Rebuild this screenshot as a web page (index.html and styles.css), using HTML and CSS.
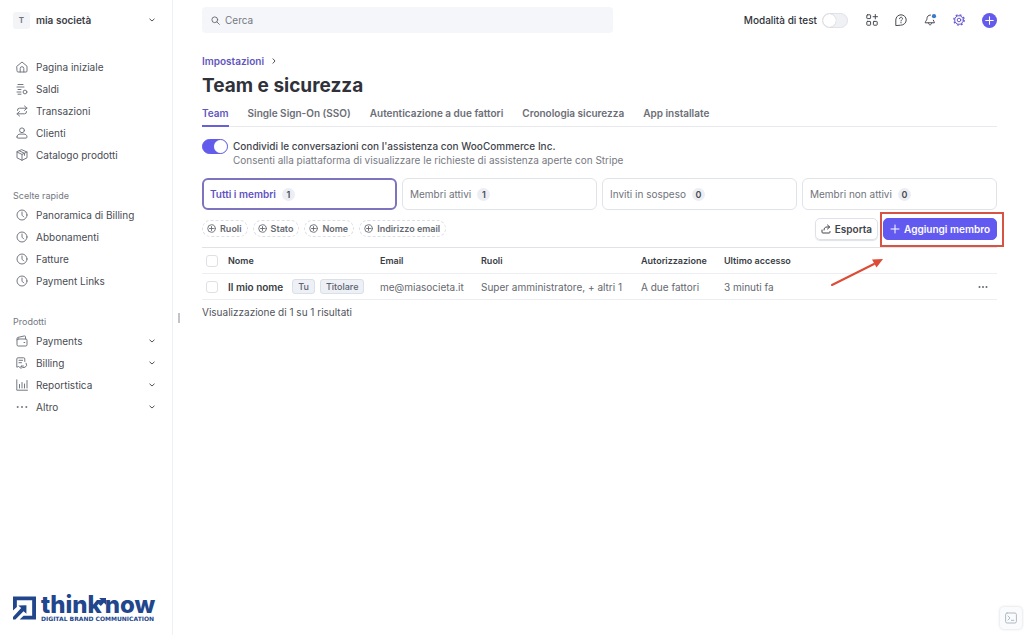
FILE: index.html
```html
<!doctype html>
<html lang="it">
  <head>
    <meta charset="UTF-8" />
    <meta name="viewport" content="width=device-width, initial-scale=1.0" />
    <title>Team e sicurezza</title>
    <link rel="stylesheet" href="styles.css" />
  </head>
  <body>
    <svg class="sprite" aria-hidden="true">
      <symbol id="chevron" viewBox="0 0 8 8"><path d="M1.800 3 4 5l2.200-2" /></symbol>
      <symbol id="clock" viewBox="0 0 12 12"><circle cx="6" cy="6" r="5" /><path d="M6 3v3.200l1.700 1.700" /></symbol>
      <symbol id="plus-circle" viewBox="0 0 10 10"><circle cx="5" cy="5" r="4.200" /><path d="M5 2.800v4.400M2.800 5h4.400" /></symbol>
    </svg>

    <div class="layout">
      <aside class="sidebar">
        <button class="account" type="button">
          <span class="avatar">T</span>
          <span class="account-name">mia società</span>
          <svg class="chevron"><use href="#chevron" /></svg>
        </button>

        <nav class="nav">
          <a href="#" class="nav-link">
            <svg class="icon" viewBox="0 0 12 12"><path d="M1 5.200 6 1l5 4.200V10a1 1 0 0 1-1 1H2a1 1 0 0 1-1-1zM4.200 11V7.500a1.800 1.800 0 0 1 3.600 0V11" /></svg>
            Pagina iniziale
          </a>
          <a href="#" class="nav-link">
            <svg class="icon" viewBox="0 0 12 12"><path d="M2 1.500h5M1 4h7M2 6.500h3M1 9h4M2 11.200h3" /><circle cx="9" cy="9" r="1.900" /></svg>
            Saldi
          </a>
          <a href="#" class="nav-link">
            <svg class="icon" viewBox="0 0 12 12"><path d="M8.500 1 11 3.200 8.500 5.400M11 3.200H3.500A2 2 0 0 0 1.500 5.500M3.500 6.600 1 8.800 3.500 11M1 8.800h7.500a2 2 0 0 0 2-2.300" /></svg>
            Transazioni
          </a>
          <a href="#" class="nav-link">
            <svg class="icon" viewBox="0 0 12 12"><circle cx="6" cy="3.300" r="2.400" /><path d="M1 10c0-2 1.500-2.900 3-2.900h4c1.500 0 3 .9 3 2.900 0 .7-.4 1.100-1 1.100H2c-.6 0-1-.4-1-1.100z" /></svg>
            Clienti
          </a>
          <a href="#" class="nav-link">
            <svg class="icon" viewBox="0 0 12 12"><path d="M6 .8 11 3v5.800L6 11.300 1 8.800V3zM1 3l5 2.400L11 3M6 5.400v5.900M3.500 1.900l5 2.400v2" /></svg>
            Catalogo prodotti
          </a>
        </nav>

        <nav class="nav">
          <h2 class="nav-title">Scelte rapide</h2>
          <a href="#" class="nav-link"><svg class="icon"><use href="#clock" /></svg>Panoramica di Billing</a>
          <a href="#" class="nav-link"><svg class="icon"><use href="#clock" /></svg>Abbonamenti</a>
          <a href="#" class="nav-link"><svg class="icon"><use href="#clock" /></svg>Fatture</a>
          <a href="#" class="nav-link"><svg class="icon"><use href="#clock" /></svg>Payment Links</a>
        </nav>

        <nav class="nav">
          <h2 class="nav-title">Prodotti</h2>
          <button class="nav-link" type="button">
            <svg class="icon" viewBox="0 0 12 12"><rect x="1" y="4" width="10" height="7" rx="1.200" /><path d="M1 5V3.500c0-.6.300-1 .9-1.100L8.500.9c.6-.1 1 .2 1 .8V4M8 7.500h.8" /></svg>
            Payments
            <svg class="chevron"><use href="#chevron" /></svg>
          </button>
          <button class="nav-link" type="button">
            <svg class="icon" viewBox="0 0 12 12"><path d="M8.800 4.500V2A1.200 1.200 0 0 0 7.600.8H2A1.200 1.200 0 0 0 .8 2v8.200L2.500 9.500l1.500 1M3 3.300h3.600M3 5.700h2.500M10.200 6.200a2.800 2.800 0 1 1-5 3M7.400 9H5v2.400" /></svg>
            Billing
            <svg class="chevron"><use href="#chevron" /></svg>
          </button>
          <button class="nav-link" type="button">
            <svg class="icon" viewBox="0 0 12 12"><path d="M.8.800v10.400h10.700M3.500 5.500V9M6 3.500V9M8.500 5V9M11 1.500V9" /></svg>
            Reportistica
            <svg class="chevron"><use href="#chevron" /></svg>
          </button>
          <button class="nav-link" type="button">
            <svg class="icon dots" viewBox="0 0 12 12"><circle cx="1.700" cy="6" r="1" /><circle cx="6" cy="6" r="1" /><circle cx="10.300" cy="6" r="1" /></svg>
            Altro
            <svg class="chevron"><use href="#chevron" /></svg>
          </button>
        </nav>

        <div class="brand">
          <svg class="brand-mark" viewBox="0 0 24 24"><path d="M0 0h24v24H7l4-4h9V4H4v7l-4 3.500z" /><path d="M5.500 9.500 14 9v9l-3-2.700L2.500 24H0v-2.500L8.500 12z" /></svg>
          <div class="brand-text">
            <span class="brand-name">think<svg class="brand-arrow" viewBox="0 0 7 7"><path d="M1 0h6v6L5.200 4.200 2.500 7 0 4.800l2.800-2.900z" /></svg>now</span>
            <span class="brand-tagline">DIGITAL BRAND COMMUNICATION</span>
          </div>
        </div>
      </aside>

      <div class="resizer"></div>

      <div class="content">
        <header class="topbar">
          <label class="search">
            <svg class="search-icon" viewBox="0 0 10 10"><circle cx="4.200" cy="4.200" r="3.200" /><path d="m6.600 6.600 2.700 2.700" /></svg>
            <input type="text" placeholder="Cerca" aria-label="Cerca" />
          </label>
          <div class="tools">
            <label class="test-mode">
              Modalità di test
              <input type="checkbox" class="switch" />
            </label>
            <button class="tool" type="button" aria-label="App">
              <svg viewBox="0 0 12 12"><rect x=".8" y=".8" width="3.800" height="3.800" rx=".6" /><rect x=".8" y="7.400" width="3.800" height="3.800" rx=".6" /><rect x="7.400" y="7.400" width="3.800" height="3.800" rx=".6" /><path d="M9.300.500v4.400M7.100 2.700h4.400" /></svg>
            </button>
            <button class="tool" type="button" aria-label="Assistenza">
              <svg viewBox="0 0 12 12"><path d="M.8 11.200V6A5.200 5.200 0 1 1 6 11.200z" /><path d="M4.500 4.700c0-2 3-2 3 0C7.500 5.800 6 5.800 6 7M6 8.500v.4" /></svg>
            </button>
            <button class="tool" type="button" aria-label="Notifiche">
              <svg viewBox="0 0 12 12"><path d="M6.500 1C4 1 3 2.800 3 4.500c0 2-1.800 2.700-1.800 4.300h9.200c0-1-.7-1.500-1.100-2.600M4.500 9c.2 2.600 2.900 2.600 3.200 0" /><circle class="alert" cx="10" cy="2.200" r="2.100" /></svg>
            </button>
            <button class="tool active" type="button" aria-label="Impostazioni">
              <svg viewBox="0 0 12 12"><circle cx="6" cy="6" r="4.300" /><circle class="teeth" cx="6" cy="6" r="5.200" /><circle cx="6" cy="6" r="1.800" /></svg>
            </button>
            <button class="tool create" type="button" aria-label="Crea">
              <svg viewBox="0 0 14 14"><circle cx="7" cy="7" r="7" /><path d="M7 3.500v7M3.500 7h7" /></svg>
            </button>
          </div>
        </header>

        <main class="main">
          <div class="breadcrumb">
            <a href="#">Impostazioni</a>
            <svg class="chevron right"><use href="#chevron" /></svg>
          </div>
          <h1>Team e sicurezza</h1>

          <nav class="tabs">
            <a href="#" class="tab active">Team</a>
            <a href="#" class="tab">Single Sign-On (SSO)</a>
            <a href="#" class="tab">Autenticazione a due fattori</a>
            <a href="#" class="tab">Cronologia sicurezza</a>
            <a href="#" class="tab">App installate</a>
          </nav>

          <div class="share">
            <input type="checkbox" class="switch" id="share" checked />
            <label for="share">
              <span class="share-title">Condividi le conversazioni con l'assistenza con WooCommerce Inc.</span>
              <span class="share-text">Consenti alla piattaforma di visualizzare le richieste di assistenza aperte con Stripe</span>
            </label>
          </div>

          <div class="cards">
            <button class="card selected" type="button">Tutti i membri <span class="count">1</span></button>
            <button class="card" type="button">Membri attivi <span class="count">1</span></button>
            <button class="card" type="button">Inviti in sospeso <span class="count">0</span></button>
            <button class="card" type="button">Membri non attivi <span class="count">0</span></button>
          </div>

          <div class="toolbar">
            <div class="filters">
              <button class="filter" type="button"><svg><use href="#plus-circle" /></svg>Ruoli</button>
              <button class="filter" type="button"><svg><use href="#plus-circle" /></svg>Stato</button>
              <button class="filter" type="button"><svg><use href="#plus-circle" /></svg>Nome</button>
              <button class="filter" type="button"><svg><use href="#plus-circle" /></svg>Indirizzo email</button>
            </div>
            <div class="actions">
              <button class="btn" type="button">
                <svg viewBox="0 0 10 10"><path d="M1 6v2.200c0 .5.300.8.800.8h6.400c.5 0 .8-.3.800-.8V7.500M3 6c0-2 1-3 3-3h2.500M6.500 1l2.200 2-2.200 2" /></svg>
                Esporta
              </button>
              <div class="highlight">
                <button class="btn primary" type="button">
                  <svg viewBox="0 0 10 10"><path d="M5 1v8M1 5h8" /></svg>
                  Aggiungi membro
                </button>
                <svg class="arrow" viewBox="0 0 54 30"><path class="arrow-line" d="M2 27 44 6" /><path class="arrow-head" d="m53 1-6.500 8.500L42 1.500z" /></svg>
              </div>
            </div>
          </div>

          <table class="members">
            <colgroup>
              <col class="col-check" />
              <col class="col-name" />
              <col class="col-email" />
              <col class="col-roles" />
              <col class="col-auth" />
              <col />
              <col class="col-more" />
            </colgroup>
            <thead>
              <tr>
                <th><input type="checkbox" class="check" aria-label="Seleziona tutti" /></th>
                <th>Nome</th>
                <th>Email</th>
                <th>Ruoli</th>
                <th>Autorizzazione</th>
                <th>Ultimo accesso</th>
                <th></th>
              </tr>
            </thead>
            <tbody>
              <tr>
                <td><input type="checkbox" class="check" aria-label="Seleziona Il mio nome" /></td>
                <td>
                  <div class="member">
                    <strong>Il mio nome</strong>
                    <span class="badge">Tu</span>
                    <span class="badge">Titolare</span>
                  </div>
                </td>
                <td>me@miasocieta.it</td>
                <td>Super amministratore, + altri 1</td>
                <td>A due fattori</td>
                <td>3 minuti fa</td>
                <td>
                  <button class="more" type="button" aria-label="Altre azioni">
                    <svg viewBox="0 0 10 10"><circle cx="1.500" cy="5" r="1" /><circle cx="5" cy="5" r="1" /><circle cx="8.500" cy="5" r="1" /></svg>
                  </button>
                </td>
              </tr>
            </tbody>
          </table>
          <p class="results">Visualizzazione di 1 su 1 risultati</p>
        </main>
      </div>
    </div>

    <button class="console" type="button" aria-label="Console">
      <svg viewBox="0 0 12 12"><rect x=".6" y="1" width="10.800" height="10" rx="1.500" /><path d="m3 4 2 2-2 2M6.300 8.300h2.500" /></svg>
    </button>
  </body>
</html>
```

FILE: styles.css
```css
* {
  box-sizing: border-box;
}
body {
  margin: 0;
  font-family: Inter, "Liberation Sans", sans-serif;
  font-size: 10px;
  line-height: 14px;
  color: #50545c;
  background: #fff;
}
button,
input {
  font: inherit;
  color: inherit;
}
button {
  padding: 0;
  border: none;
  background: none;
  cursor: pointer;
}
a {
  color: inherit;
  text-decoration: none;
}
svg {
  flex: none;
  fill: none;
  stroke: currentColor;
  stroke-linecap: round;
  stroke-linejoin: round;
}
.sprite {
  display: none;
}
.layout {
  display: flex;
  min-height: 100vh;
}

/* sidebar */
.sidebar {
  display: flex;
  flex-direction: column;
  flex: none;
  width: 173px;
  padding: 11px 16px 13px 13px;
  border-right: 1px solid #eef0f3;
}
.account {
  display: flex;
  align-items: center;
  height: 18px;
  margin-bottom: 27px;
  font-weight: 600;
  color: #3d4048;
}
.avatar {
  width: 17px;
  height: 17px;
  margin-right: 6px;
  border-radius: 3px;
  font-size: 8px;
  line-height: 17px;
  color: #6c7078;
  background: #f2f4f7;
}
.chevron {
  width: 8px;
  height: 8px;
  margin-left: auto;
  color: #50545c;
}
.nav {
  margin-bottom: 22px;
}
.nav-title {
  margin: 0;
  padding: 1px 0 2px;
  font-size: 9px;
  font-weight: 400;
  line-height: 13px;
  color: #74787f;
}
.nav-link {
  display: flex;
  align-items: center;
  width: 100%;
  height: 22px;
  padding-left: 3px;
  color: #484b53;
}
.icon {
  width: 12px;
  height: 12px;
  margin-right: 8px;
  color: #747881;
}
.dots {
  fill: currentColor;
  stroke: none;
}
.brand {
  display: flex;
  align-items: center;
  gap: 5px;
  margin-top: auto;
  color: #21468c;
}
.brand-mark {
  width: 23px;
  height: 24px;
  fill: currentColor;
  stroke: none;
}
.brand-text {
  display: flex;
  flex-direction: column;
}
.brand-name {
  display: flex;
  font-size: 24px;
  font-weight: 800;
  line-height: 22px;
}
.brand-arrow {
  width: 8px;
  height: 8px;
  margin: 4px -1px 0 -4px;
  fill: currentColor;
  stroke: none;
}
.brand-tagline {
  font-family: "DejaVu Sans", sans-serif;
  font-size: 6px;
  font-weight: 700;
  line-height: 6px;
  white-space: nowrap;
}
.resizer {
  align-self: center;
  flex: none;
  width: 2px;
  height: 10px;
  margin-left: 5px;
  background: #c2c4c9;
}

/* top bar */
.content {
  flex: 1;
  min-width: 0;
  padding: 7px 27px 0 22px;
}
.topbar {
  display: flex;
  align-items: center;
  justify-content: space-between;
  height: 26px;
}
.search {
  display: flex;
  align-items: center;
  gap: 5px;
  flex: 0 1 411px;
  height: 26px;
  padding: 0 9px;
  border-radius: 4px;
  background: #f5f6f9;
}
.search-icon {
  width: 9px;
  height: 9px;
  color: #656971;
}
.search input {
  flex: 1;
  min-width: 0;
  padding: 0;
  border: none;
  outline: none;
  background: none;
}
.search input::placeholder {
  color: #747881;
  opacity: 1;
}
.tools {
  display: flex;
  align-items: center;
  gap: 17px;
}
.test-mode {
  display: flex;
  align-items: center;
  gap: 5px;
  margin-right: 1px;
  font-weight: 500;
  color: #30333a;
}
.tool {
  display: flex;
  color: #484b53;
}
.tool svg {
  width: 12px;
  height: 12px;
  overflow: visible;
}
.tool.active {
  color: #6658d3;
}
.tool .teeth {
  stroke-width: 1.3;
  stroke-linecap: butt;
  stroke-dasharray: 2 2.084;
}
.tool .alert {
  fill: #3c78c8;
  stroke: none;
}
.tool.create svg {
  width: 15px;
  height: 15px;
  color: #fff;
}
.create circle {
  fill: #635bec;
  stroke: none;
}
.switch {
  appearance: none;
  flex: none;
  display: flex;
  width: 26px;
  height: 15px;
  margin: 0;
  border: 1px solid #dfe2e8;
  border-radius: 8px;
  background: #f0f1f5;
}
.switch::before {
  content: "";
  width: 13px;
  height: 13px;
  border-radius: 50%;
  background: #fff;
  box-shadow: 0 0 1px #a9acb5;
}
.switch:checked {
  justify-content: flex-end;
  border-color: #635bec;
  background: #635bec;
}

/* page heading */
.main {
  padding-top: 21px;
}
.breadcrumb {
  display: flex;
  align-items: center;
  gap: 6px;
  font-weight: 600;
  color: #6156be;
}
.right {
  margin: 0;
  transform: rotate(-90deg);
}
h1 {
  margin: 5px 0 7px;
  font-size: 19px;
  line-height: 26px;
  font-weight: 700;
  color: #30323a;
}
.tabs {
  display: flex;
  gap: 19px;
  border-bottom: 1px solid #e8eaee;
}
.tab {
  height: 21px;
  margin-bottom: -1px;
  font-weight: 600;
  color: #6b6e76;
}
.tab.active {
  color: #6156be;
  border-bottom: 2px solid #6a60d6;
}
.share {
  display: flex;
  gap: 5px;
  margin: 12px 0 11px;
}
.share-title,
.share-text {
  display: block;
}
.share-title {
  font-weight: 500;
  color: #42454d;
}
.share-text {
  color: #777a82;
}

/* members */
.cards {
  display: grid;
  grid-template-columns: repeat(4, 1fr);
  gap: 5px;
}
.card {
  display: flex;
  align-items: center;
  gap: 6px;
  height: 32px;
  padding: 0 7px;
  border: 1px solid #e0e3e8;
  border-radius: 6px;
  color: #70737b;
}
.card.selected {
  border: 2px solid #7c74be;
  padding: 0 6px;
  font-weight: 600;
  color: #6052c4;
}
.count {
  min-width: 13px;
  border-radius: 7px;
  font-size: 9px;
  line-height: 13px;
  font-weight: 600;
  color: #484b53;
  background: #eceef3;
}
.toolbar {
  display: flex;
  align-items: center;
  justify-content: space-between;
  height: 37px;
}
.filters,
.actions {
  display: flex;
  align-items: center;
  gap: 5px;
}
.filter {
  display: flex;
  align-items: center;
  gap: 4px;
  height: 17px;
  padding: 0 5px 0 4px;
  border: 1px dashed #dcdfe5;
  border-radius: 9px;
  font-size: 9px;
  font-weight: 600;
  color: #656870;
}
.filter svg {
  width: 9px;
  height: 9px;
}
.btn {
  display: flex;
  align-items: center;
  gap: 4px;
  height: 22px;
  padding: 0 5px;
  border: 1px solid #dfe2e7;
  border-radius: 5px;
  font-weight: 600;
  color: #42454d;
  box-shadow: 0 1px 1px #dfe2e7;
}
.btn svg {
  width: 10px;
  height: 10px;
}
.btn.primary {
  padding: 0 6px;
  border-color: #625af0;
  color: #fff;
  background: #625af0;
  box-shadow: none;
}
.highlight {
  position: relative;
}
/* red frame around the button, with the arrow below it */
.highlight::after {
  content: "";
  position: absolute;
  inset: -6px -7px -7px -3px;
  border: 2px solid #d75445;
  pointer-events: none;
}
.arrow {
  position: absolute;
  top: 40px;
  right: 113px;
  width: 54px;
  height: 30px;
  pointer-events: none;
}
.arrow-line {
  stroke: #dc4c36;
  stroke-width: 2;
}
.arrow-head {
  fill: #dc4c36;
  stroke: none;
}
.members {
  width: 100%;
  table-layout: fixed;
  border-collapse: collapse;
  border-top: 1px solid #dfe2e6;
}
.members tr {
  height: 26px;
  border-bottom: 1px solid #eceef1;
}
.members th,
.members td {
  padding: 0;
  text-align: left;
  white-space: nowrap;
  color: #656870;
}
.members th {
  font-size: 9px;
  font-weight: 600;
  color: #3a3d45;
}
.col-check {
  width: 26px;
}
.col-name {
  width: 152px;
}
.col-email {
  width: 101px;
}
.col-roles {
  width: 160px;
}
.col-auth {
  width: 83px;
}
.col-more {
  width: 19px;
}
.check {
  appearance: none;
  display: block;
  width: 12px;
  height: 12px;
  margin: 0 0 0 4px;
  border: 1px solid #dde0e5;
  border-radius: 3px;
}
.member {
  display: flex;
  align-items: center;
  gap: 5px;
}
.member strong {
  margin-right: 4px;
  font-weight: 600;
  color: #3a3d45;
}
.badge {
  padding: 0 5px;
  border: 1px solid #dbdfe7;
  border-radius: 3px;
  font-size: 9px;
  line-height: 13px;
  font-weight: 500;
  color: #5c6270;
  background: #edf0f5;
}
.more {
  display: flex;
}
.more svg {
  width: 10px;
  height: 10px;
  fill: currentColor;
  stroke: none;
}
.results {
  margin: 5px 0 0;
}
.console {
  position: fixed;
  right: 2px;
  bottom: 6px;
  display: flex;
  padding: 5px;
  border-radius: 4px;
  color: #b1b8c3;
  background: #fafbfc;
  box-shadow: 0 0 3px #cfd3da;
}
.console svg {
  width: 12px;
  height: 12px;
}
```
